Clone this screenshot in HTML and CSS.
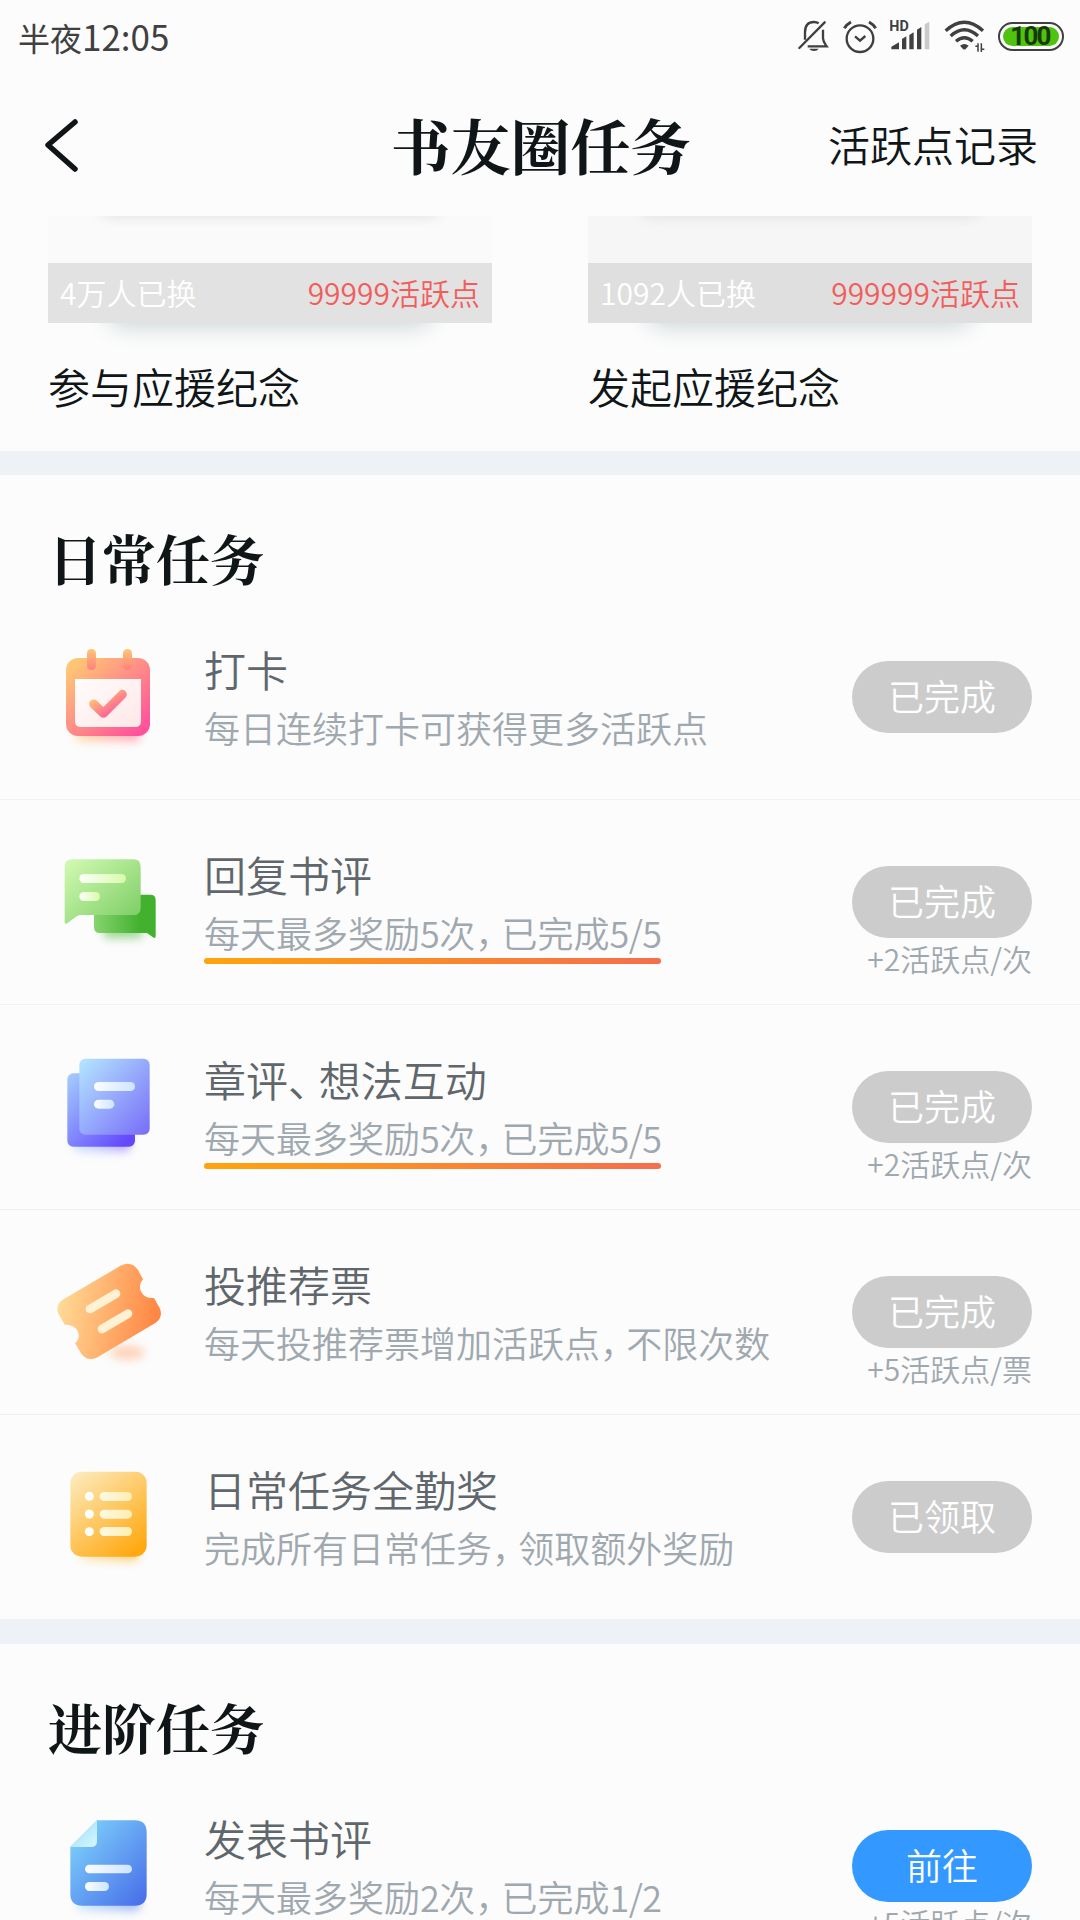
FILE: index.html
```html
<!DOCTYPE html>
<html lang="zh-CN">
<head>
  <meta charset="UTF-8" />
  <meta name="viewport" content="width=device-width, initial-scale=1.0"/>
  <title>书友圈任务</title>
  <link rel="stylesheet" href="styles.css">
</head>
<body>
  <div class="status-bar">
    <div class="time">半夜<span>12:05</span></div>
    <div class="status-icons">
      <svg class="bell" width="32" height="32" viewBox="47 31 96 96" fill="none" stroke="#404040" stroke-width="7">
        <path d="M54 115 130 38" stroke-linecap="round"/>
        <path d="M71 90V68c0-22 12-31 27-31 6 0 10 1 14 4"/>
        <path d="M125 60v26c1 12 6 17 11 24H79"/>
        <path d="M84 117h28q-4 7-14 7t-14-7z" fill="#404040" stroke="none"/>
      </svg>
      <svg class="alarm" width="34" height="34" viewBox="187 29 102 102" fill="none" stroke="#404040" stroke-width="7">
        <circle cx="238" cy="85" r="40"/>
        <path d="M223 78 238 91 254 77"/>
        <path d="M191 54q7-12 20-19M285 54q-7-12-20-19" stroke-width="9"/>
      </svg>
      <svg class="signal" width="40" height="32" viewBox="328 26 120 96" fill="#404040">
        <text x="326" y="62" class="hd">HD</text>
        <path d="M332 117v-8l23-13v21zM364 117V86l13-8v39zM386 117V74l13-8v51zM409 117V58l13-8v67z"/>
        <path d="M432 117V42l14-8v83z" fill="#cacaca"/>
      </svg>
      <svg class="wifi" width="41" height="34" viewBox="490 28 123 102" fill="none" stroke="#404040" stroke-width="10">
        <path d="M495 63q56-51 112 0M510 79q41-37 82 0M526 95q25-22 50 0"/>
        <path d="M538 108q13-10 26 0l-9 10q-4 3-8 0z" fill="#404040" stroke="none"/>
        <path d="M584 110h8v16M592 101v25M602 127v-26M602 119h9" stroke-width="4.5"/>
      </svg>
      <div class="battery"><span>100</span></div>
    </div>
  </div>

  <div class="nav">
    <svg class="back" width="36" height="56" viewBox="0 0 36 56"><path d="M31 5 4 28 31 52" fill="none" stroke="#101617" stroke-width="5.5" stroke-linecap="round" stroke-linejoin="round"/></svg>
    <h1>书友圈任务</h1>
    <div class="record">活跃点记录</div>
  </div>

  <div class="gifts">
    <div class="gift">
      <div class="cover"></div>
      <div class="bar"><span>4万人已换</span><span class="price">99999活跃点</span></div>
      <div class="shadow"></div>
      <div class="gift-name">参与应援纪念</div>
    </div>
    <div class="gift">
      <div class="cover grain"></div>
      <div class="bar dark"><span>1092人已换</span><span class="price">999999活跃点</span></div>
      <div class="shadow"></div>
      <div class="gift-name">发起应援纪念</div>
    </div>
  </div>

  <div class="section daily">
    <h2>日常任务</h2>
    <div class="task">
      <svg class="icon" viewBox="144 405 360 360">
        <defs>
          <linearGradient id="cal" x1="0" y1="0" x2="1" y2="1"><stop offset=".08" stop-color="#ffc774"/><stop offset=".92" stop-color="#ff519b"/></linearGradient>
          <linearGradient id="calTab" x1="0" y1="0" x2="0" y2="1"><stop offset="0" stop-color="#ffc873"/><stop offset="1" stop-color="#ff7f81"/></linearGradient>
          <linearGradient id="calPaper" x1="0" y1="0" x2="1" y2="1"><stop offset="0" stop-color="#fffdfc"/><stop offset="1" stop-color="#fee7e7"/></linearGradient>
          <linearGradient id="calShade"><stop offset="0" stop-color="#ffc774"/><stop offset="1" stop-color="#ff6f90"/></linearGradient>
          <filter id="blur" x="-40%" y="-80%" width="180%" height="260%"><feGaussianBlur stdDeviation="14"/></filter>
        </defs>
        <rect x="228" y="680" width="192" height="44" rx="14" fill="url(#calShade)" opacity=".6" filter="url(#blur)"/>
        <rect x="198" y="474" width="252" height="234" rx="36" fill="url(#cal)"/>
        <rect x="261" y="447" width="27" height="63" rx="13.500" fill="url(#calTab)"/>
        <rect x="369" y="447" width="27" height="63" rx="13.500" fill="url(#calTab)"/>
        <path d="M225 537h198v126q0 18-18 18H243q-18 0-18-18z" fill="url(#calPaper)"/>
        <path d="M281 612 310 640 367 583" fill="none" stroke="url(#cal)" stroke-width="27" stroke-linecap="round" stroke-linejoin="round"/>
      </svg>
      <div class="info">
        <div class="name">打卡</div>
        <div class="desc">每日连续打卡可获得更多活跃点</div>
      </div>
      <div class="action"><div class="btn">已完成</div></div>
    </div>

    <div class="task">
      <svg class="icon" viewBox="24 30 360 360">
        <defs>
          <linearGradient id="chat" x1="0" y1="0" x2="1" y2="1"><stop offset="0" stop-color="#d3fbb3"/><stop offset="1" stop-color="#78cb62"/></linearGradient>
          <linearGradient id="chatBack"><stop offset="0" stop-color="#86d46f"/><stop offset=".75" stop-color="#42b12e"/></linearGradient>
          <linearGradient id="chatLine"><stop offset="0" stop-color="#fdfffb"/><stop offset="1" stop-color="#d8fbaa"/></linearGradient>
        </defs>
        <rect x="190" y="285" width="118" height="40" rx="14" fill="#42b12e" opacity=".5" filter="url(#blur)"/>
        <path d="M162 210q0-16 16-16h153q16 0 16 16v108q0 9-8 4l-18-13H180q-18 0-18-18z" fill="url(#chatBack)"/>
        <path d="M74 110q0-22 22-22h184q22 0 22 22v123q0 22-22 22H122q-6 0-12 4l-28 21q-8 4-8-4z" fill="url(#chat)"/>
        <rect x="118" y="132" width="140" height="27" rx="13.500" fill="url(#chatLine)"/>
        <rect x="118" y="186" width="62" height="27" rx="13.500" fill="url(#chatLine)"/>
      </svg>
      <div class="info">
        <div class="name">回复书评</div>
        <div class="desc line">每天最多奖励<i>5</i>次<b>，</b>已完成<i>5/5</i></div>
      </div>
      <div class="action"><div class="btn">已完成</div><div class="reward">+2活跃点/次</div></div>
    </div>

    <div class="task">
      <svg class="icon" viewBox="24 645 360 360">
        <defs>
          <linearGradient id="page" x1="0" y1="0" x2="1" y2="1"><stop offset="0" stop-color="#b5e7ff"/><stop offset="1" stop-color="#776cf8"/></linearGradient>
          <linearGradient id="pageBack" x1="0" y1="0" x2="1" y2="1"><stop offset="0" stop-color="#a4ceff"/><stop offset=".9" stop-color="#6449fb"/></linearGradient>
          <linearGradient id="pageLine"><stop offset="0" stop-color="#fbfdff"/><stop offset="1" stop-color="#cfe4ff"/></linearGradient>
          <linearGradient id="pageShade"><stop offset="0" stop-color="#a4ceff"/><stop offset="1" stop-color="#6449fb"/></linearGradient>
        </defs>
        <rect x="100" y="920" width="170" height="44" rx="14" fill="url(#pageShade)" opacity=".5" filter="url(#blur)"/>
        <rect x="82" y="730" width="203" height="220" rx="18" fill="url(#pageBack)"/>
        <rect x="118" y="686" width="211" height="228" rx="18" fill="url(#page)"/>
        <rect x="162" y="756" width="123" height="27" rx="13.500" fill="url(#pageLine)"/>
        <rect x="162" y="809" width="61" height="27" rx="13.500" fill="url(#pageLine)"/>
      </svg>
      <div class="info">
        <div class="name">章评<b>、</b>想法互动</div>
        <div class="desc line">每天最多奖励<i>5</i>次<b>，</b>已完成<i>5/5</i></div>
      </div>
      <div class="action"><div class="btn">已完成</div><div class="reward">+2活跃点/次</div></div>
    </div>

    <div class="task">
      <svg class="icon" viewBox="24 30 360 360">
        <defs>
          <linearGradient id="ticket" gradientUnits="userSpaceOnUse" x1="60" y1="190" x2="350" y2="240"><stop offset="0" stop-color="#ffd995"/><stop offset="1" stop-color="#ff8643"/></linearGradient>
        </defs>
        <ellipse cx="262" cy="338" rx="52" ry="20" fill="#ff9a5e" opacity=".45" filter="url(#blur)"/>
        <path d="M68 179 244 76q30-14 50 14l15 28c-8 8-13 24-5 38q10 20 38 18l18 32q10 26-14 43L170 353q-28 12-46-12l-19-31c10-8 14-22 9-35q-10-22-40-21L56 223q-12-26 12-44z" fill="url(#ticket)"/>
        <path d="M150 207 228 161M186 267 264 221" stroke="#fff1d3" stroke-width="26" stroke-linecap="round"/>
      </svg>
      <div class="info">
        <div class="name">投推荐票</div>
        <div class="desc">每天投推荐票增加活跃点<b>，</b>不限次数</div>
      </div>
      <div class="action"><div class="btn">已完成</div><div class="reward">+5活跃点/票</div></div>
    </div>

    <div class="task">
      <svg class="icon" viewBox="24 645 360 360">
        <defs>
          <linearGradient id="list" x1="0.1" y1="0" x2=".8" y2="1"><stop offset="0" stop-color="#fdeabb"/><stop offset="1" stop-color="#ffa80f"/></linearGradient>
          <linearGradient id="listLine"><stop offset="0" stop-color="#fff9e5"/><stop offset="1" stop-color="#ffedb1"/></linearGradient>
          <linearGradient id="listShade"><stop offset="0" stop-color="#ffe2a0"/><stop offset="1" stop-color="#ffa80f"/></linearGradient>
        </defs>
        <rect x="120" y="920" width="175" height="42" rx="14" fill="url(#listShade)" opacity=".6" filter="url(#blur)"/>
        <rect x="91" y="695" width="229" height="255" rx="34" fill="url(#list)"/>
        <g fill="#fff"><circle cx="148" cy="769" r="13.500"/><circle cx="148" cy="822" r="13.500"/><circle cx="148" cy="875" r="13.500"/></g>
        <g fill="url(#listLine)">
          <rect x="179" y="756" width="97" height="27" rx="13.500"/>
          <rect x="179" y="809" width="97" height="27" rx="13.500"/>
          <rect x="179" y="861" width="97" height="27" rx="13.500"/>
        </g>
      </svg>
      <div class="info">
        <div class="name">日常任务全勤奖</div>
        <div class="desc">完成所有日常任务<b>，</b>领取额外奖励</div>
      </div>
      <div class="action"><div class="btn">已领取</div></div>
    </div>
  </div>

  <div class="section advanced">
    <h2>进阶任务</h2>
    <div class="task">
      <svg class="icon" viewBox="144 582 360 360">
        <defs>
          <linearGradient id="doc" x1="0.1" y1="0.1" x2="1" y2="1"><stop offset="0" stop-color="#7ccffa"/><stop offset="1" stop-color="#466be9"/></linearGradient>
          <linearGradient id="docFold" x1="0" y1="0" x2="1" y2="1"><stop offset=".3" stop-color="#a9e4fb"/><stop offset="1" stop-color="#d8f7ff"/></linearGradient>
          <linearGradient id="docShade"><stop offset="0" stop-color="#a4dfff"/><stop offset="1" stop-color="#466be9"/></linearGradient>
        </defs>
        <rect x="230" y="860" width="190" height="42" rx="14" fill="url(#docShade)" opacity=".5" filter="url(#blur)"/>
        <path d="M291 631h113q36 0 36 36v184q0 36-36 36H247q-36 0-36-36V711z" fill="url(#doc)"/>
        <path d="M211 711 291 631v62q0 18-18 18z" fill="url(#docFold)"/>
        <rect x="255" y="764" width="141" height="26" rx="13" fill="url(#pageLine)"/>
        <rect x="255" y="816" width="72" height="27" rx="13.500" fill="url(#pageLine)"/>
      </svg>
      <div class="info">
        <div class="name">发表书评</div>
        <div class="desc">每天最多奖励<i>2</i>次<b>，</b>已完成<i>1/2</i></div>
      </div>
      <div class="action"><div class="btn go">前往</div><div class="reward">+5活跃点/次</div></div>
    </div>
  </div>
</body>
</html>
```

FILE: styles.css
```css
* { box-sizing: border-box; }
body { margin: 0; width: 1080px; height: 1920px; overflow: hidden; background: #fcfcfc; color: #101617; font-family: "Noto Sans CJK SC", sans-serif; font-weight: 350; }
h1, h2 { margin: 0; font-family: "Noto Serif CJK SC", "Noto Serif SC", "Source Han Serif SC", "Noto Sans CJK SC", serif; font-weight: 700; white-space: nowrap; }
svg { display: block; flex: none; }

.status-bar { display: flex; justify-content: space-between; height: 74px; padding: 0 16px 0 18px; }
.time { font-size: 32px; line-height: 71px; color: #404040; font-weight: 400; }
.time span { font-size: 35px; }
.status-icons { display: flex; align-items: flex-start; padding-top: 20px; }
.alarm { margin-left: 14px; }
.signal { margin: -1px 0 0 13px; }
.wifi { margin: -1px 0 0 14px; }
.hd { font: 700 43px Roboto, sans-serif; }
.battery { width: 66px; height: 29px; margin: 2px 0 0 13px; padding: 3px; border: 2.5px solid #404040; border-radius: 15px; }
.battery span { display: block; height: 19px; padding-right: 2px; border-radius: 10px; background: #4fc30f; color: #173a05; font: 700 26px/19px Roboto, sans-serif; letter-spacing: -1.8px; text-align: center; }

.nav { display: grid; grid-template-columns: 1fr auto 1fr; align-items: center; height: 142px; padding: 0 42px 0 44px; }
.nav h1 { font-size: 60px; line-height: 140px; height: 142px; margin-left: -1px; }
.record { padding-bottom: 4px; font-size: 42px; text-align: right; }

.gifts { display: flex; gap: 96px; height: 235px; padding: 0 48px; }
.gift { width: 444px; }
.cover { height: 47px; overflow: hidden; background: #fafafa; }
.grain { background: #f6f6f6; }
.cover::before { content: ""; display: block; height: 20px; margin: -22px 52px 0; border-radius: 10px; box-shadow: 0 2px 14px #dedede; }
.bar { display: flex; justify-content: space-between; height: 60px; padding: 0 12px; background: #e2e2e2; color: #fff; font-size: 30px; line-height: 59px; }
.dark { background: #dfdfdf; }
.price { color: #f25d5c; }
.shadow { height: 32px; overflow: hidden; }
.shadow::before { content: ""; display: block; height: 40px; margin: -42px 60px 0; border-radius: 16px; box-shadow: 0 5px 24px #c8d2d6; }
.gift-name { font-size: 42px; line-height: 62px; }

.section { border-top: 24px solid #eef1f5; }
.advanced { border-top-width: 25px; }
h2 { height: 120px; padding: 0 48px; font-size: 54px; line-height: 165px; }
.task { display: flex; height: 205px; padding: 0 48px; border-bottom: 1px solid #eff1f4; }
.daily .task:last-child { height: 204px; border-bottom: 0; }
.icon { width: 120px; height: 120px; margin-top: 40px; }
.info { display: flex; flex-direction: column; align-items: flex-start; flex: 1; padding: 52px 0 0 36px; white-space: nowrap; }
.name { font-size: 42px; line-height: 44px; color: #5f676d; }
.desc { margin-top: 14px; font-size: 36px; line-height: 44px; color: #a0a8af; }
.desc i { font-style: normal; letter-spacing: -.6px; }
/* half-width punctuation with a little air after it */
.info b { font-weight: inherit; font-feature-settings: "halt"; margin-right: .23em; }
.line::after { content: ""; display: block; height: 6px; margin-top: 4px; border-radius: 3px; background: linear-gradient(90deg, #ffa40d, #f46e4d); }
.action { width: 180px; padding-top: 66px; }
.btn { height: 72px; border-radius: 36px; background: #ccc; color: #fff; font-size: 36px; line-height: 69px; text-align: center; }
.go { background: #3398ff; }
.reward { font-size: 30px; line-height: 40px; color: #a0a8af; text-align: right; white-space: nowrap; }
```
